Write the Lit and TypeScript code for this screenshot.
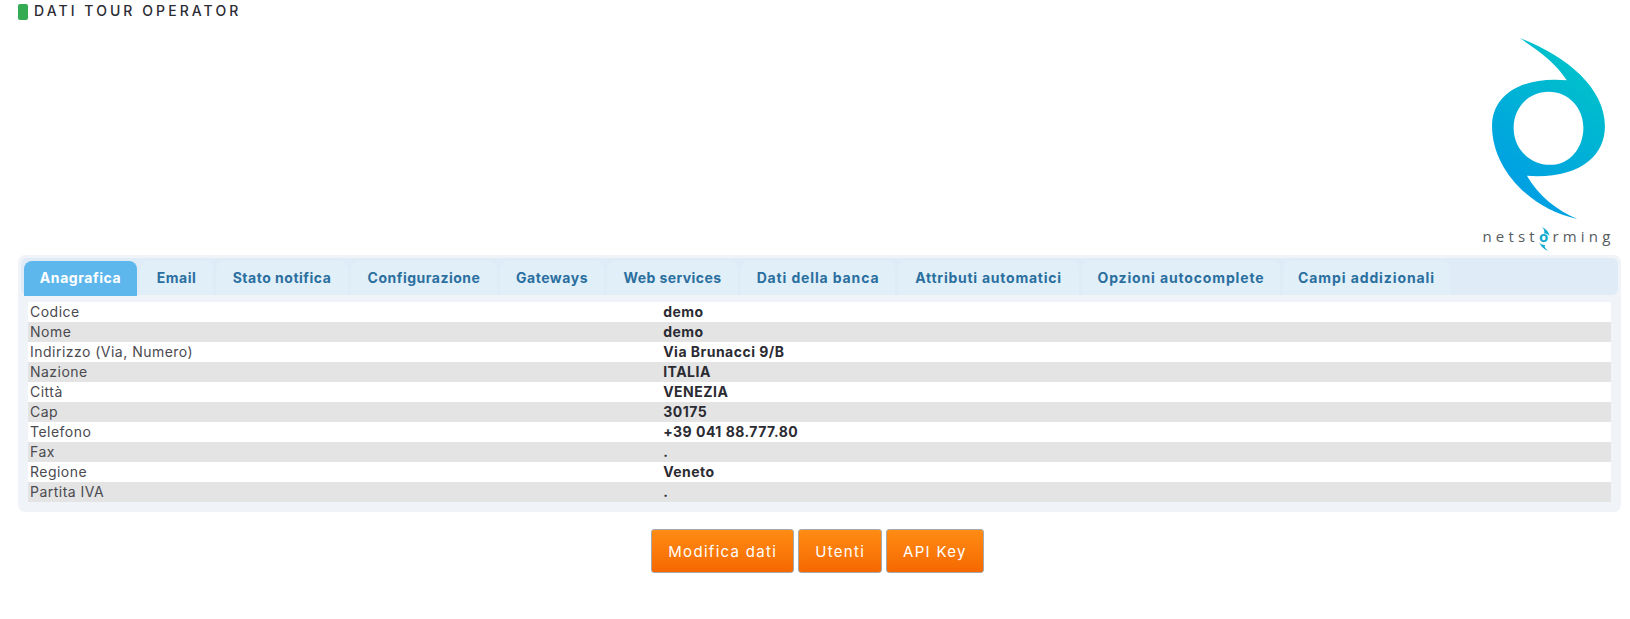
import { LitElement, html, css } from "lit";
import { customElement } from "lit/decorators.js";

const TABS: [string, number, number][] = [
  ["Anagrafica",113,.55],["Email",73,.55],["Stato notifica",132,.5],["Configurazione",146,.5],["Gateways",104,.55],
  ["Web services",131,.4],["Dati della banca",154,.86],["Attributi automatici",181,.75],["Opzioni autocomplete",198,.85],["Campi addizionali",167,.9],
];
const ROWS: [string,string][] = [["Codice","demo"],["Nome","demo"],["Indirizzo (Via, Numero)","Via Brunacci 9/B"],["Nazione","ITALIA"],["Città","VENEZIA"],["Cap","30175"],["Telefono","+39 041 88.777.80"],["Fax","."],["Regione","Veneto"],["Partita IVA","."]];

@customElement("app-root")
export class AppRoot extends LitElement {
  static styles = css`
    :host { display: block; font-family: Inter, "DejaVu Sans", sans-serif; color: #333; padding: 4px 9px 0 18px; }
    .title { display: flex; align-items: center; gap: 6px; height: 16px; }
    .mark { width: 10px; height: 16px; background: #34ac54; border-radius: 2px; }
    .title span { font-size: 14px; line-height: 14px; font-weight: 500; letter-spacing: 3.07px; color: #2b2b33; margin-top: -3px; }
    .logo-row { display: flex; justify-content: flex-end; padding-right: 6px; height: 235px; }
    .logo { display: flex; flex-direction: column; align-items: center; width: 133px; }
    .logo > svg { display: block; margin-top: 18px; }
    .brand { font-family: "Open Sans", sans-serif; font-size: 15px; font-weight: 500; line-height: 18px; letter-spacing: 4.2px; color: #555c60; margin-top: 8px; white-space: nowrap; }
    .brand b { position: relative; font-weight: 700; color: #12a9cf; }
    .swirl { position: absolute; left: -1px; top: 1px; width: 12px; height: 24px; }
    .panel { background: #f0f4f8; border-radius: 7px; padding: 3px 3px 10px 3px; }
    .tabs { display: flex; gap: 3px; background: #dfebf6; border-radius: 6px; height: 37px; padding: 3px 0 0 3px; box-sizing: border-box; }
    .tab { display: flex; align-items: center; justify-content: center; height: 34px; padding-bottom: 2px; box-sizing: border-box; background: #e1eff9; color: #2b6f9f; font-weight: 700; font-size: 14px; border-radius: 8px 8px 0 0; white-space: nowrap; }
    .tab.on { background: #5db7ec; color: #fff; height: 35px; padding-bottom: 3px; }
    .table { margin: 7px 7px 0 7px; display: flex; flex-direction: column; }
    .row { display: grid; grid-template-columns: 40% 1fr; height: 20px; background: #fff; font-size: 14px; line-height: 20px; letter-spacing: .48px; }
    .row:nth-child(even) { background: #e4e4e4; }
    .row div { padding-left: 2px; white-space: nowrap; }
    .k { color: #4a4a4f; font-weight: 400; }
    .v { color: #2b2b33; font-weight: 700; }
    .actions { display: flex; justify-content: center; gap: 4px; margin: 17px 0 0 -4px; }
    .btn { height: 44px; box-sizing: border-box; padding: 0 16px; display: flex; align-items: center; border: 1px solid #a4a9ae; border-radius: 3px; background: linear-gradient(#ff8c14, #f56800); color: #fff; font: 400 15px Inter, sans-serif; letter-spacing: 1.3px; }
  `;
  render() {
    return html`
      <div class="title"><i class="mark"></i><span>DATI TOUR OPERATOR</span></div>
      <div class="logo-row"><div class="logo">
        <svg width="113" height="181" viewBox="125 55 340 545">
          <defs><linearGradient id="g" x1="0.7" y1="0.15" x2="0.35" y2="0.9"><stop offset="0" stop-color="#00c0cc"/><stop offset="1" stop-color="#009fe3"/></linearGradient></defs>
          <path fill="url(#g)" fill-rule="evenodd" d="M208 55C340 105 465 200 465 320C465 410 390 480 230 470C265 530 320 575 382 600C240 570 125 450 125 320C125 225 215 170 350 182C320 135 270 95 208 55ZM295 217C235 217 190 265 190 325C190 390 240 437 300 437C360 437 400 385 400 325C400 265 355 217 295 217Z"/>
        </svg>
        <div class="brand">netst<b>o<svg class="swirl" viewBox="0 0 12 24"><path fill="#12a9cf" d="M4 0C8 2 11 5 11.500 9C10 7 8 6.500 6 6.500C7 4.500 6 2 4 0ZM1 15C2 17 4 18 7 18C6 20 8 22.500 11 24C7 23 3 20 1 15Z"/></svg></b>rming</div>
      </div></div>
      <div class="panel">
        <div class="tabs">${TABS.map(([t,w,s],i)=>html`<div class="tab ${i===0?"on":""}" style="width:${w}px;letter-spacing:${s}px">${t}</div>`)}</div>
        <div class="table">${ROWS.map(([k,v])=>html`<div class="row"><div class="k">${k}</div><div class="v">${v}</div></div>`)}</div>
      </div>
      <div class="actions">
        <div class="btn">Modifica dati</div><div class="btn">Utenti</div><div class="btn">API Key</div>
      </div>
    `;
  }
}
